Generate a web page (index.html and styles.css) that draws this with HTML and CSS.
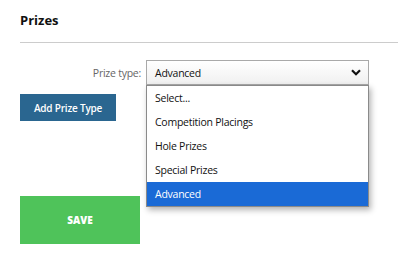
FILE: index.html
```html
<!DOCTYPE html>
<html lang="en">
<head>
    <meta charset="UTF-8">
    <meta name="viewport" content="width=device-width, initial-scale=1.0">
    <title>Prizes</title>
    <link rel="stylesheet" href="styles.css">
</head>
<body>
    <div class="panel">
        <h2 class="title">Prizes</h2>
        <div class="form-row">
            <label class="label">Prize type:</label>
            <div class="select-wrap">
                <div class="select">
                    <span>Advanced</span>
                    <svg class="chevron" width="10" height="7" viewBox="0 0 10 7">
                        <path d="M1 1.2 L5 5.2 L9 1.2" fill="none" stroke="#111" stroke-width="2.2"/>
                    </svg>
                </div>
                <ul class="options">
                    <li>Select...</li>
                    <li>Competition Placings</li>
                    <li>Hole Prizes</li>
                    <li>Special Prizes</li>
                    <li class="selected">Advanced</li>
                </ul>
            </div>
        </div>
        <button class="btn-add">Add Prize Type</button>
        <button class="btn-save">SAVE</button>
    </div>
</body>
</html>
```

FILE: styles.css
```css
body {
    margin: 0;
    background-color: #fff;
    font-family: "Open Sans", Arial, sans-serif;
    color: #222;
}
.panel {
    padding: 11px 0 0 20px;
}
.title {
    font-size: 13px;
    font-weight: 700;
    margin: 0;
    padding-bottom: 12px;
    border-bottom: 1px solid #ccc;
    line-height: 19px;
    color: #111;
}
.form-row {
    display: flex;
    align-items: center;
    margin-top: 17px;
    height: 25px;
}
.label {
    width: 121px;
    text-align: right;
    font-size: 10.5px;
    letter-spacing: -0.25px;
    color: #666;
    padding-right: 5px;
}
.select-wrap {
    position: relative;
}
.select {
    height: 23px;
    border: 1px solid #a9a9a9;
    background: linear-gradient(#fff, #f0f0f0);
    display: flex;
    align-items: center;
    justify-content: space-between;
    padding: 0 7px 0 8px;
    box-sizing: content-box;
    width: 206px;
    font-size: 10.5px;
    letter-spacing: -0.25px;
    color: #111;
}
.chevron {
    display: block;
}
.options {
    position: absolute;
    top: 25px;
    left: 0;
    width: 221px;
    margin: 0;
    padding: 0;
    list-style: none;
    background: #fff;
    border: 1px solid #8a8a8a;
    box-shadow: 2px 3px 6px rgba(0, 0, 0, 0.3);
    font-size: 10.5px;
    letter-spacing: -0.25px;
    color: #111;
    z-index: 2;
}
.options li {
    height: 24px;
    line-height: 24px;
    padding-left: 8px;
}
.options li.selected {
    background: #1a6ad6;
    color: #fff;
}
.btn-add {
    display: block;
    margin-top: 9px;
    width: 96px;
    height: 27px;
    border: none;
    background: #2a6690;
    color: #fff;
    font-family: "Open Sans", Arial, sans-serif;
    font-size: 10px;
    letter-spacing: -0.2px;
    font-weight: 600;
    padding: 0;
}
.btn-save {
    display: block;
    margin-top: 75px;
    width: 120px;
    height: 48px;
    border: none;
    background: #4fc35a;
    color: #fff;
    font-family: "Open Sans", Arial, sans-serif;
    font-size: 10px;
    font-weight: 800;
    padding: 0;
}
```
